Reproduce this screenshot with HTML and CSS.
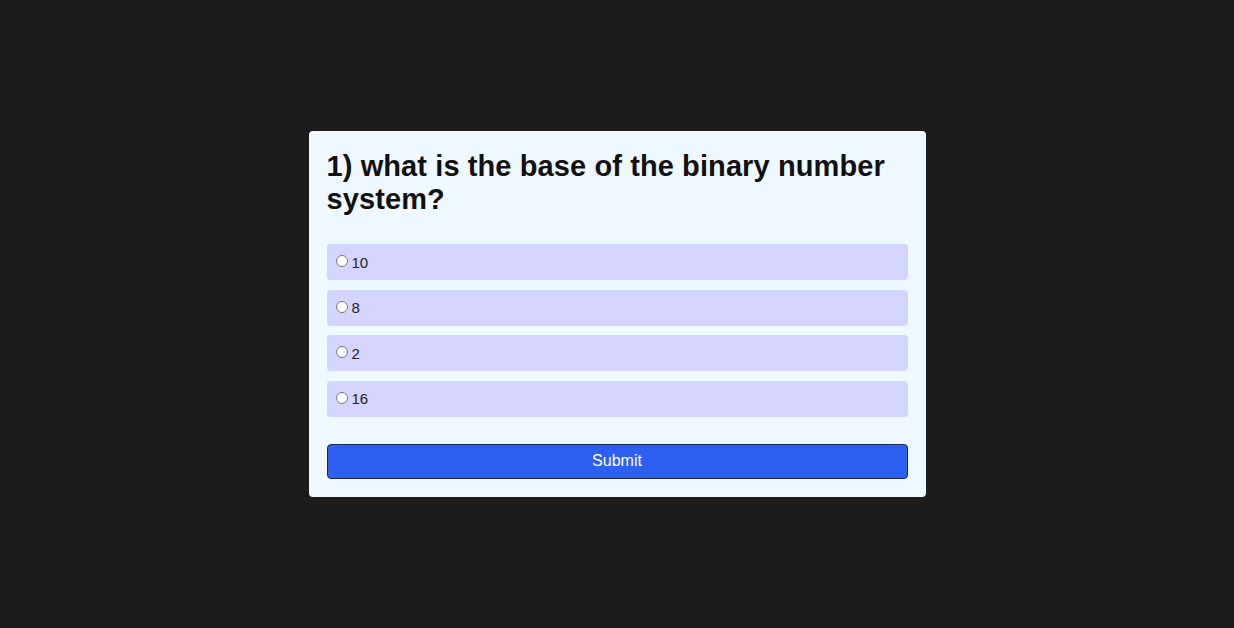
FILE: index.html
```html
<!DOCTYPE html>
<html lang="en">
<head>
<meta charset="utf-8">
<title>Quiz</title>
<link rel="stylesheet" href="styles.css">
</head>
<body>
<div class="card">
  <h2 class="question">1) what is the base of the binary number system?</h2>
  <ul class="options">
    <li class="option"><input type="radio" name="q1" id="a"><label for="a">10</label></li>
    <li class="option"><input type="radio" name="q1" id="b"><label for="b">8</label></li>
    <li class="option"><input type="radio" name="q1" id="c"><label for="c">2</label></li>
    <li class="option"><input type="radio" name="q1" id="d"><label for="d">16</label></li>
  </ul>
  <button class="submit">Submit</button>
</div>
</body>
</html>
```
FILE: styles.css
```css
html, body {
  margin: 0;
  padding: 0;
}
body {
  background: #1c1c1c;
  font-family: "Liberation Sans", Arial, sans-serif;
  height: 100vh;
  display: flex;
  align-items: center;
  justify-content: center;
}
.card {
  width: 617px;
  box-sizing: border-box;
  background: #eff7ff;
  border-radius: 4px;
  padding: 19px 18px 18px 18px;
}
.question {
  margin: 0 0 28px;
  font-size: 29px;
  line-height: 33px;
  font-weight: bold;
  color: #111;
  letter-spacing: 0.1px;
}
.options {
  list-style: none;
  margin: 0;
  padding: 0;
  display: flex;
  flex-direction: column;
  gap: 9.5px;
}
.option {
  height: 36px;
  background: #d4d4ff;
  border-radius: 4px;
  display: flex;
  align-items: center;
  padding-left: 9px;
  font-size: 15px;
  color: #222;
}
.option input {
  margin: 0 4px 2px 0;
  width: 12px;
  height: 12px;
}
.submit {
  display: block;
  width: 100%;
  margin-top: 27px;
  height: 35px;
  background: #2d60f0;
  color: #fff;
  border: 1px solid #1b2b55;
  border-radius: 4px;
  font-family: "Liberation Sans", Arial, sans-serif;
  font-size: 16px;
}
```
